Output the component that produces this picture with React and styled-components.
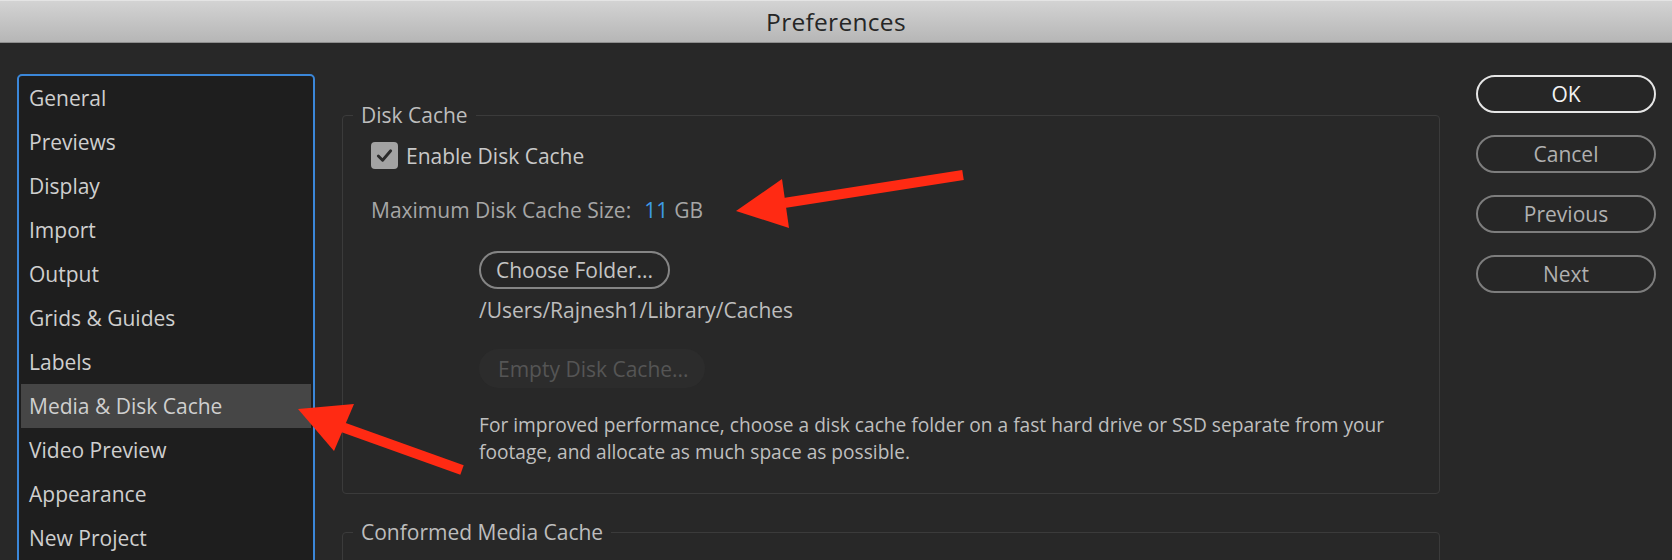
import React from "react";
import styled, { createGlobalStyle } from "styled-components";

const Global = createGlobalStyle`
    html, body {
        margin: 0;
        padding: 0;
        height: 560px;
        overflow: hidden;
        background: #282828;
        font-family: "Open Sans", "Noto Sans", sans-serif;
    }
`;

const Window = styled.div`
    position: relative;
    width: 1672px;
    height: 560px;
    display: flex;
    flex-direction: column;
    overflow: hidden;
    background: #282828;
`;

const TitleBar = styled.div`
    flex: none;
    display: flex;
    align-items: center;
    justify-content: center;
    background: linear-gradient(#d3d3d3, #b6b6b6);
    border-top: 1px solid #e4e4e4;
    border-bottom: 1px solid #8e8e8e;
    box-sizing: border-box;
    height: 43px;
    color: #262626;
    font-size: 24.5px;
    letter-spacing: 0.3px;
`;

const Body = styled.div`
    flex: 1;
    display: flex;
    padding: 31px 16px 0 17px;
    min-height: 0;
`;

const Sidebar = styled.ul`
    list-style: none;
    margin: 0;
    padding: 0 2px;
    width: 298px;
    height: 520px;
    box-sizing: border-box;
    flex: none;
    background: #1e1e1e;
    border: 2px solid #3b87d9;
    border-radius: 5px;
`;

const Item = styled.li`
    height: 44px;
    display: flex;
    align-items: center;
    padding-left: 8px;
    font-size: 21px;
    color: #cfcfcf;
    background: ${(p) => (p.$active ? "#464646" : "transparent")};
`;

const Main = styled.div`
    width: 1098px;
    margin-left: 27px;
    margin-top: 27px;
    flex: none;
`;

const Group = styled.fieldset`
    margin: 0 0 ${(p) => p.$gap || 0}px 0;
    padding: 0 0 27px 0;
    border: 1px solid #3b3b3b;
    border-radius: 4px;
    min-width: 0;
    min-height: ${(p) => p.$minHeight || 0}px;
`;

const Legend = styled.legend`
    margin-left: 10px;
    padding: 0 8px;
    font-size: 21px;
    line-height: 28px;
    color: #bdbdbd;
`;

const Content = styled.div`
    padding: 13px 0 0 28px;
    display: flex;
    flex-direction: column;
`;

const CheckRow = styled.label`
    display: flex;
    align-items: center;
    gap: 8px;
    height: 27px;
    font-size: 21px;
    color: #c9c9c9;
`;

const Box = styled.span`
    width: 27px;
    height: 27px;
    border-radius: 4px;
    background: #a3a3a3;
    display: flex;
    align-items: center;
    justify-content: center;
`;

const SizeRow = styled.div`
    margin-top: 27px;
    font-size: 21px;
    line-height: 28px;
    color: #a6a6a6;
`;

const Value = styled.span`
    color: #3d9be6;
    margin-left: 13px;
    margin-right: 6px;
`;

const Indent = styled.div`
    margin-left: 108px;
    display: flex;
    flex-direction: column;
    align-items: flex-start;
`;

const Pill = styled.button`
    box-sizing: border-box;
    height: 38px;
    width: ${(p) => p.$width}px;
    border-radius: 19px;
    border: 2px solid ${(p) => (p.$primary ? "#e6e6e6" : "#7d7d7d")};
    background: #262626;
    color: ${(p) => (p.$primary ? "#f2f2f2" : "#b0b0b0")};
    font-family: inherit;
    font-size: 21px;
    padding: 0;
    display: flex;
    align-items: center;
    justify-content: center;
    white-space: nowrap;
`;

const FolderButton = styled(Pill)`
    margin-top: 27px;
    color: #c4c4c4;
    border-color: #858585;
`;

const Path = styled.div`
    margin-top: 7px;
    margin-left: 0;
    font-size: 21px;
    line-height: 28px;
    color: #bdbdbd;
`;

const DisabledButton = styled.button`
    margin-top: 25px;
    box-sizing: border-box;
    height: 39px;
    width: 226px;
    border: none;
    border-radius: 20px;
    background: #2c2c2c;
    color: #555555;
    font-family: inherit;
    font-size: 21px;
    text-align: left;
    white-space: nowrap;
    padding: 0 0 0 19px;
`;

const Note = styled.p`
    margin: 24px 0 0 0;
    width: 920px;
    font-size: 19.15px;
    line-height: 27px;
    color: #bfbfbf;
`;

const Actions = styled.div`
    margin-left: 36px;
    margin-top: 1px;
    display: flex;
    flex-direction: column;
    gap: 22px;
    flex: none;
`;

const Overlay = styled.svg`
    position: absolute;
    left: 0;
    top: 0;
    pointer-events: none;
`;

const items = [
    "General",
    "Previews",
    "Display",
    "Import",
    "Output",
    "Grids & Guides",
    "Labels",
    "Media & Disk Cache",
    "Video Preview",
    "Appearance",
    "New Project",
];

const RED = "#ff2a13";

const Arrows = () => (
    <Overlay width="1672" height="560" viewBox="0 0 1672 560">
        <line x1="963" y1="175" x2="784" y2="203" stroke={RED} strokeWidth="10" strokeLinecap="butt" />
        <polygon points="736,211 782,179 789,228" fill={RED} />
        <line x1="462" y1="470" x2="342" y2="427" stroke={RED} strokeWidth="10" strokeLinecap="butt" />
        <polygon points="298,409 354,404 334,451" fill={RED} />
    </Overlay>
);

const App = () => {
    return (
        <Window>
            <Global />
            <TitleBar>Preferences</TitleBar>
            <Body>
                <Sidebar>
                    {items.map((name) => (
                        <Item key={name} $active={name === "Media & Disk Cache"}>
                            {name}
                        </Item>
                    ))}
                </Sidebar>
                <Main>
                    <Group $gap={24}>
                        <Legend>Disk Cache</Legend>
                        <Content>
                            <CheckRow>
                                <Box>
                                    <svg width="19" height="19" viewBox="0 0 20 20">
                                        <path d="M3.5 10.5 L8 15 L16.5 5" fill="none" stroke="#2b2b2b" strokeWidth="3" strokeLinecap="round" strokeLinejoin="round" />
                                    </svg>
                                </Box>
                                Enable Disk Cache
                            </CheckRow>
                            <SizeRow>
                                Maximum Disk Cache Size:<Value>11</Value>GB
                            </SizeRow>
                            <Indent>
                                <FolderButton $width={191}>Choose Folder...</FolderButton>
                                <Path>/Users/Rajnesh1/Library/Caches</Path>
                                <DisabledButton disabled>Empty Disk Cache...</DisabledButton>
                                <Note>
                                    For improved performance, choose a disk cache folder on a fast hard drive or SSD separate from your
                                    footage, and allocate as much space as possible.
                                </Note>
                            </Indent>
                        </Content>
                    </Group>
                    <Group $minHeight={200}>
                        <Legend>Conformed Media Cache</Legend>
                    </Group>
                </Main>
                <Actions>
                    <Pill $primary $width={180}>OK</Pill>
                    <Pill $width={180}>Cancel</Pill>
                    <Pill $width={180}>Previous</Pill>
                    <Pill $width={180}>Next</Pill>
                </Actions>
            </Body>
            <Arrows />
        </Window>
    );
};

export default App;
